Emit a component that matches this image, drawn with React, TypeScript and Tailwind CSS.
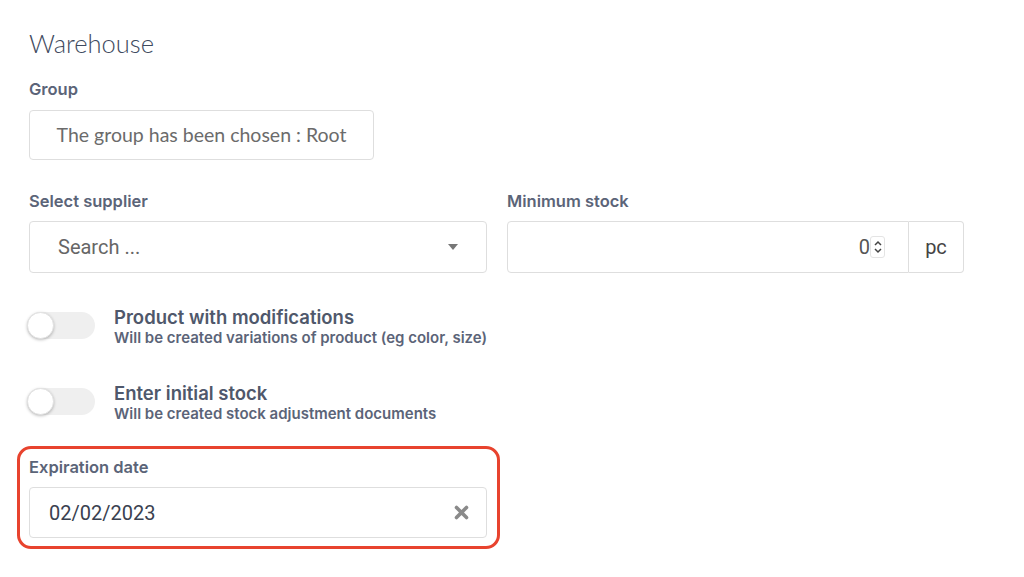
import React from "react";

const labelCls =
  "text-[16.5px] leading-[20px] font-semibold text-[#5b6478] font-['Inter',sans-serif]";

function Toggle() {
  return (
    <div className="relative w-[68px] h-[27px] shrink-0">
      <div className="absolute left-0 top-0 w-[68px] h-[27px] rounded-full bg-[#efefef]" />
      <div className="absolute left-0 top-0 w-[27px] h-[27px] rounded-full bg-white border border-[#e2e2e2] shadow-[0_1px_3px_rgba(0,0,0,0.25)]" />
    </div>
  );
}

export default function App() {
  return (
    <div className="w-[1024px] h-[577px] bg-white overflow-hidden font-['Roboto',sans-serif]">
      <div className="pl-[29px] pt-[27px] w-[964px]">
        <div className="text-[25.5px] leading-[32px] font-light text-[#3e4a5e] font-['Lato',sans-serif]">
          Warehouse
        </div>
        <div className={`${labelCls} mt-[20px]`}>Group</div>
        <div className="mt-[11px] w-[345px] h-[50px] border border-[#dedede] rounded-[4px] flex items-center justify-center text-[19.5px] text-[#6b6b6b] font-['Lato',sans-serif]">
          The group has been chosen : Root
        </div>

        <div className="mt-[31px] grid grid-cols-[458px_457px] gap-x-[20px]">
          <div>
            <div className={labelCls}>Select supplier</div>
            <div className="mt-[10px] h-[52px] border border-[#dedede] rounded-[4px] flex items-center justify-between pl-[28px] pr-[28px]">
              <span className="text-[20px] text-[#666]">Search ...</span>
              <svg width="10" height="6" viewBox="0 0 10 6">
                <path d="M0 0 H10 L5 6 Z" fill="#777" />
              </svg>
            </div>
          </div>
          <div>
            <div className={labelCls}>Minimum stock</div>
            <div className="mt-[10px] h-[52px] flex">
              <div className="flex-1 border border-[#dedede] rounded-l-[4px] flex items-center justify-end pr-[23px]">
                <span className="text-[20px] text-[#555]">0</span>
                <span className="ml-[0px] w-[15px] h-[22px] rounded-[3px] border border-[#e4e4e4] bg-white flex flex-col items-center justify-center">
                  <svg width="8" height="16" viewBox="0 0 8 16">
                    <path d="M1 6 L4 3 L7 6" stroke="#444" strokeWidth="1.5" fill="none" />
                    <path d="M1 10 L4 13 L7 10" stroke="#444" strokeWidth="1.5" fill="none" />
                  </svg>
                </span>
              </div>
              <div className="w-[55px] border border-l-0 border-[#dedede] rounded-r-[4px] flex items-center justify-center text-[20px] text-[#444]">
                pc
              </div>
            </div>
          </div>
        </div>

        <div className="mt-[32px] flex items-start">
          <div className="mt-[7px] -ml-[2px]">
            <Toggle />
          </div>
          <div className="ml-[19px] font-['Inter',sans-serif]">
            <div className="text-[18.5px] leading-[24px] font-semibold text-[#4f586b]">
              Product with modifications
            </div>
            <div className="text-[15px] leading-[18px] font-semibold text-[#5b6478]">
              Will be created variations of product (eg color, size)
            </div>
          </div>
        </div>

        <div className="mt-[34px] flex items-start">
          <div className="mt-[7px] -ml-[2px]">
            <Toggle />
          </div>
          <div className="ml-[19px] font-['Inter',sans-serif]">
            <div className="text-[18.5px] leading-[24px] font-semibold text-[#4f586b]">
              Enter initial stock
            </div>
            <div className="text-[15px] leading-[18px] font-semibold text-[#5b6478]">
              Will be created stock adjustment documents
            </div>
          </div>
        </div>

        <div className="mt-[23px] -ml-[12px] w-[483px] h-[103px] border-[3px] border-[#e8432e] rounded-[14px] pl-[9px] pt-[8px]">
          <div className={labelCls}>Expiration date</div>
          <div className="mt-[10px] w-[458px] h-[51px] border border-[#dedede] rounded-[4px] flex items-center justify-between pl-[19px] pr-[17px]">
            <span className="text-[20px] text-[#3a4150]">02/02/2023</span>
            <svg width="15" height="15" viewBox="0 0 15 15">
              <path d="M2.5 2.5 L12.5 12.5 M12.5 2.5 L2.5 12.5" stroke="#8a8a8a" strokeWidth="3.6" strokeLinecap="round" />
            </svg>
          </div>
        </div>
      </div>
    </div>
  );
}
